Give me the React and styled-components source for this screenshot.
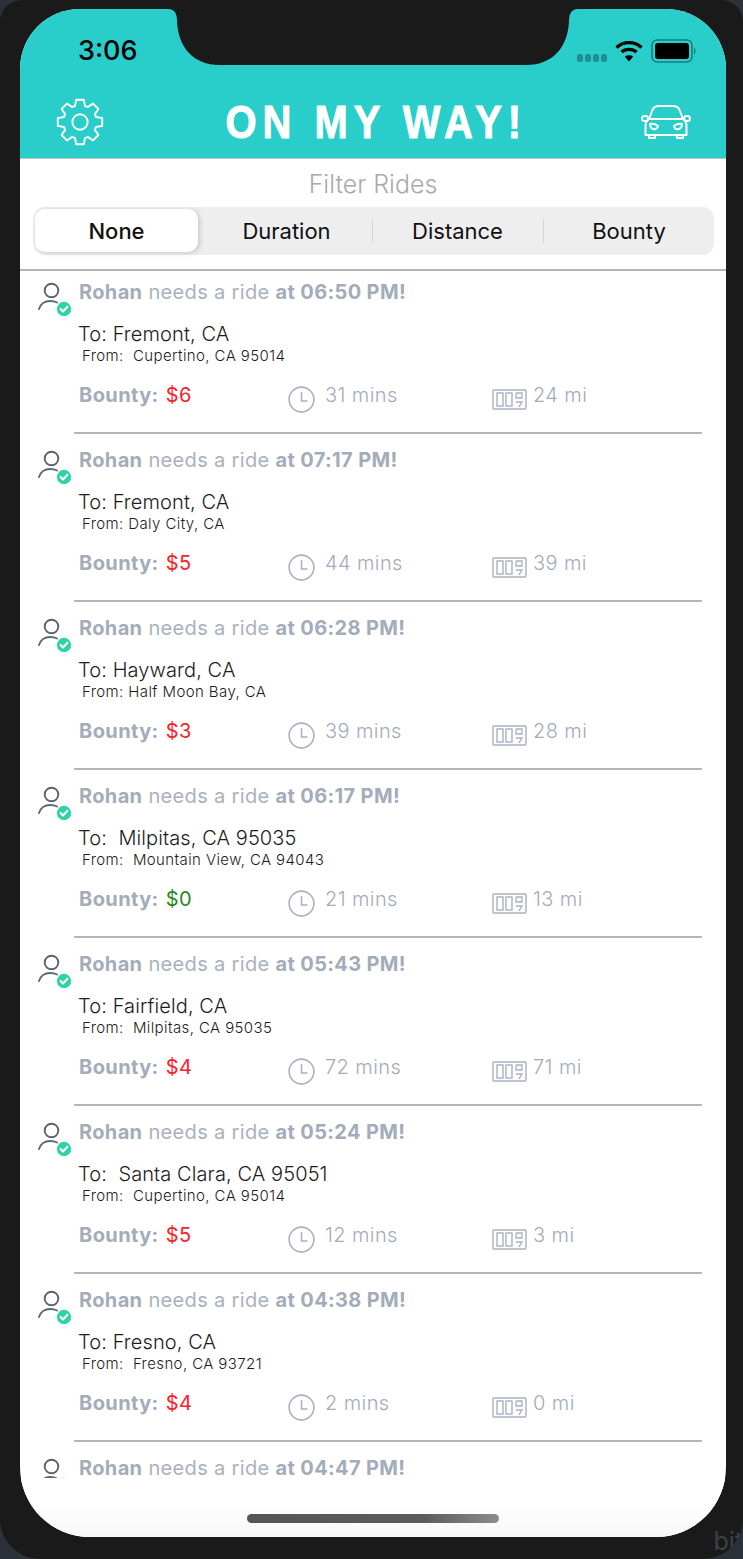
import React from "react";
import styled, { createGlobalStyle } from "styled-components";

const GlobalStyle = createGlobalStyle`
  html, body {
    margin: 0;
    padding: 0;
    background: #2b3039;
  }
  * {
    box-sizing: border-box;
  }
`;

const Device = styled.div`
  position: relative;
  width: 743px;
  height: 1559px;
  overflow: hidden;
  padding: 9px 17px 22px 20px;
  background: #1a1a1a;
  border-radius: 22px 22px 40px 40px;
  font-family: Inter, "Noto Sans", sans-serif;
`;

const Backdrop = styled.span`
  position: absolute;
  right: 0;
  bottom: 3px;
  font-size: 25px;
  line-height: 30px;
  color: #3f4145;
`;

const Screen = styled.div`
  position: relative;
  display: flex;
  flex-direction: column;
  height: 1528px;
  overflow: hidden;
  background: #fff;
  border-radius: 60px 60px 70px 70px;
`;

const Notch = styled.svg`
  position: absolute;
  top: 0;
  left: 148px;
  width: 410px;
  height: 56px;
`;

const Header = styled.header`
  display: flex;
  flex-direction: column;
  flex: none;
  height: 150px;
  padding: 0 35px 0 36px;
  background: #29cdca;
  border-bottom: 1px solid #b9c9c9;
`;

const StatusBar = styled.div`
  display: flex;
  align-items: center;
  justify-content: space-between;
  height: 36px;
  margin-top: 24px;
  padding-left: 22px;
`;

const Clock = styled.span`
  font-size: 27px;
  font-weight: 500;
  line-height: 36px;
  color: #000;
`;

const StatusIcons = styled.div`
  display: flex;
  align-items: center;
  margin-right: -6px;
  gap: 8px;
`;

const SignalIcon = styled.svg`
  width: 30px;
  height: 14px;
  margin-top: 13px;
`;

const TopBar = styled.div`
  display: flex;
  align-items: center;
  justify-content: space-between;
  margin-top: 28px;
  height: 50px;
`;

const Logo = styled.h1`
  margin: 0 0 0 8px;
  font-family: "Liberation Sans", sans-serif;
  font-size: 47px;
  font-weight: 700;
  line-height: 50px;
  letter-spacing: 7px;
  color: #fff;
  -webkit-text-stroke: 1px #fff;
  transform: scaleX(0.85);
`;

const FilterTitle = styled.div`
  flex: none;
  height: 48px;
  font-size: 25px;
  font-weight: 300;
  line-height: 50px;
  text-align: center;
  color: #a9a9a9;
`;

const Segments = styled.div`
  display: grid;
  flex: none;
  grid-template-columns: 163px 174px 171px 1fr;
  height: 48px;
  margin: 0 12px 0 13px;
  padding: 2px;
  background: #eeeeee;
  border-radius: 12px;
`;

const Segment = styled.div`
  position: relative;
  display: flex;
  align-items: center;
  justify-content: center;
  height: 43px;
  padding-left: ${(p) => (p.$nudge ? "3px" : "0")};
  font-size: 22px;
  font-weight: ${(p) => (p.$active ? 500 : 400)};
  color: #111;
  background: ${(p) => (p.$active ? "#fff" : "transparent")};
  border-radius: 10px;
  box-shadow: ${(p) => (p.$active ? "2px 1px 5px rgba(0, 0, 0, 0.16)" : "none")};

  &::before {
    content: "";
    display: ${(p) => (p.$divided ? "block" : "none")};
    position: absolute;
    left: 0;
    top: 10px;
    height: 24px;
    width: 1px;
    background: #d4d4d4;
  }
`;

const List = styled.div`
  flex: none;
  height: 1209px;
  margin-top: 14px;
  border-top: 2px solid #b5b5b5;
`;

const Row = styled.article`
  display: flex;
  flex-direction: column;
  height: 168px;
  padding-bottom: 5px;
`;

const RowBody = styled.div`
  display: flex;
  flex: 1;
  padding: 9px 0 0 16px;
`;

const AvatarSlot = styled.div`
  flex: none;
  width: 43px;
  height: ${(p) => (p.$cut ? "20px" : "38px")};
  margin-top: 2px;
  overflow: hidden;
`;

const AvatarIcon = styled.svg`
  display: block;
  width: 43px;
  height: 38px;
`;

const Details = styled.div`
  display: flex;
  flex-direction: column;
  flex: 1;
`;

const Title = styled.div`
  margin: 2px 0;
  font-size: 20px;
  line-height: 20px;
  letter-spacing: 0.35px;
  color: #a9b1c0;
  white-space: pre;

  b {
    font-weight: 700;
    color: #a3acbb;
  }
`;

const Destination = styled.div`
  margin-top: 18px;
  margin-left: -1px;
  font-size: 20px;
  font-weight: 300;
  line-height: 24px;
  letter-spacing: 0.1px;
  color: #1c1c1c;
  white-space: pre;
`;

const Origin = styled.div`
  margin-left: 3px;
  font-size: 15px;
  font-weight: 300;
  line-height: 20px;
  letter-spacing: 0.4px;
  color: #1c1c1c;
  white-space: pre;
`;

const Meta = styled.div`
  display: grid;
  grid-template-columns: 209px 204px auto;
  margin-top: 17px;
  font-size: 20px;
  font-weight: 300;
  line-height: 24px;
  letter-spacing: 0.4px;
  color: #a3acbb;
`;

const MetaItem = styled.div`
  display: flex;
  align-items: flex-start;
  gap: ${(p) => p.$gap}px;
`;

const BountyLabel = styled.b`
  font-weight: 700;
  margin-right: 7px;
`;

const BountyValue = styled.span`
  font-weight: 400;
  color: ${(p) => (p.$free ? "#1f8a1f" : "#fc2029")};
`;

const ClockIcon = styled.svg`
  width: 27px;
  height: 27px;
  margin-top: 3px;
`;

const OdometerIcon = styled.svg`
  width: 35px;
  height: 21px;
  margin-top: 6px;
`;

const Divider = styled.div`
  flex: none;
  height: 2px;
  margin: 0 24px 0 54px;
  background: #b3b6ba;
`;

const Footer = styled.div`
  display: flex;
  flex: 1;
  justify-content: center;
  padding-top: 36px;
  background: linear-gradient(#ffffff 40%, #f8f8f8);
`;

const HomeBar = styled.div`
  width: 252px;
  height: 9px;
  border-radius: 5px;
  background: linear-gradient(90deg, #555 0%, #5c5c5c 70%, #8c8c8c 100%);
`;

const gearPath = () => {
  const pts = [];
  const cx = 25;
  const cy = 25;
  const outer = 23.5;
  const inner = 17.5;
  for (let i = 0; i < 8; i++) {
    const a = (i * Math.PI) / 4 - Math.PI / 2;
    const at = (r, d) => [
      (cx + r * Math.cos(a + d)).toFixed(2),
      (cy + r * Math.sin(a + d)).toFixed(2),
    ];
    pts.push(at(inner, -0.3), at(outer, -0.17), at(outer, 0.17), at(inner, 0.3));
  }
  return "M" + pts.map((p) => p.join(" ")).join("L") + "Z";
};

const Gear = () => (
  <svg width="48" height="48" viewBox="0 0 50 50" fill="none" stroke="#fff" strokeWidth="2" strokeLinejoin="round">
    <path d={gearPath()} />
    <circle cx="25" cy="25" r="8" />
  </svg>
);

const Car = () => (
  <svg width="50" height="36" viewBox="0 0 50 36" fill="none" stroke="#fff" strokeWidth="2" strokeLinejoin="round" strokeLinecap="round">
    <path d="M8 15 L11.5 6 Q13 2 18 2 H32 Q37 2 38.5 6 L42 15" />
    <path d="M8 15 Q4.5 17 4.5 22 V31 H45.5 V22 Q45.5 17 42 15 Z" />
    <path d="M8 15 H42" />
    <rect x="1" y="12" width="6" height="5" rx="2.5" />
    <rect x="43" y="12" width="6" height="5" rx="2.5" />
    <path d="M8 31 V34 H14 V31 M36 31 V34 H42 V31" />
    <path d="M9 20 Q14 19 17 22 Q16 26 12 25 Q9 24 9 20 Z" />
    <path d="M41 20 Q36 19 33 22 Q34 26 38 25 Q41 24 41 20 Z" />
  </svg>
);

const Signal = () => (
  <SignalIcon viewBox="0 0 30 14" fill="#1d8f8f">
    <rect x="0" y="3" width="6" height="8" rx="2.5" />
    <rect x="8" y="3" width="6" height="8" rx="2.5" />
    <rect x="16" y="3" width="6" height="8" rx="2.5" />
    <rect x="24" y="3" width="6" height="8" rx="2.5" />
  </SignalIcon>
);

const Wifi = () => (
  <svg width="28" height="22" viewBox="0 0 28 22" fill="none" stroke="#000" strokeWidth="3.4">
    <path d="M1.5 7.5 C8.5 1 19.5 1 26.5 7.5" />
    <path d="M6.5 12 C10.5 8.5 17.5 8.5 21.5 12" />
    <path d="M14 21.5 L9.8 16.6 C12 14.8 16 14.8 18.2 16.6 Z" fill="#000" stroke="none" />
  </svg>
);

const Battery = () => (
  <svg width="46" height="24" viewBox="0 0 46 24">
    <rect x="1" y="1" width="40" height="22" rx="5" fill="none" stroke="#167f80" strokeWidth="1.6" />
    <rect x="4" y="4" width="34" height="16" rx="3" fill="#000" />
    <path d="M43 8.5 C45 9.5 45 14.5 43 15.5 Z" fill="#167f80" />
  </svg>
);

const UserBadge = ({ cut }) => (
  <AvatarSlot $cut={cut}>
    <AvatarIcon viewBox="0 0 43 38" fill="none">
      <circle cx="15.5" cy="8.5" r="6.8" stroke="#5c6472" strokeWidth="1.9" />
      <path d="M3 27 C4.5 22 9 19 14 19 C17 19 19 19.5 21 20.5" stroke="#5c6472" strokeWidth="1.9" strokeLinecap="round" />
      <circle cx="28" cy="27" r="7.2" fill="#2fd3a6" />
      <path d="M24.5 27 L27 29.5 L31.5 24.8" stroke="#fff" strokeWidth="2" strokeLinecap="round" strokeLinejoin="round" />
    </AvatarIcon>
  </AvatarSlot>
);

const Clockface = () => (
  <ClockIcon viewBox="0 0 27 27" fill="none" stroke="#a9b1c0" strokeWidth="1.6">
    <circle cx="13.5" cy="13.5" r="12.4" />
    <path d="M13.5 6.5 V15 H19" strokeLinecap="round" />
  </ClockIcon>
);

const Odometer = () => (
  <OdometerIcon viewBox="0 0 35 21" fill="none" stroke="#a9b1c0" strokeWidth="1.4">
    <rect x="1" y="1" width="33" height="19" rx="1" />
    <rect x="5" y="4" width="6" height="13" />
    <rect x="14" y="4" width="6" height="13" />
    <path d="M24 4 V9 H30 V4 H24 M24 13 H30 L27 18" />
  </OdometerIcon>
);

const rides = [
  { time: "06:50", to: "To: Fremont, CA", from: "From:  Cupertino, CA 95014", bounty: 6, mins: 31, miles: 24 },
  { time: "07:17", to: "To: Fremont, CA", from: "From: Daly City, CA", bounty: 5, mins: 44, miles: 39 },
  { time: "06:28", to: "To: Hayward, CA", from: "From: Half Moon Bay, CA", bounty: 3, mins: 39, miles: 28 },
  { time: "06:17", to: "To:  Milpitas, CA 95035", from: "From:  Mountain View, CA 94043", bounty: 0, mins: 21, miles: 13 },
  { time: "05:43", to: "To: Fairfield, CA", from: "From:  Milpitas, CA 95035", bounty: 4, mins: 72, miles: 71 },
  { time: "05:24", to: "To:  Santa Clara, CA 95051", from: "From:  Cupertino, CA 95014", bounty: 5, mins: 12, miles: 3 },
  { time: "04:38", to: "To: Fresno, CA", from: "From:  Fresno, CA 93721", bounty: 4, mins: 2, miles: 0 },
];

const filters = ["None", "Duration", "Distance", "Bounty"];

const RideTitle = ({ time }) => (
  <Title>
    <b>Rohan</b> needs a ride <b>at {time} PM!</b>
  </Title>
);

const App = () => (
  <>
    <GlobalStyle />
    <Device>
      <Backdrop>bit</Backdrop>
      <Screen>
        <Header>
          <StatusBar>
            <Clock>3:06</Clock>
            <StatusIcons>
              <Signal />
              <Wifi />
              <Battery />
            </StatusIcons>
          </StatusBar>
          <TopBar>
            <Gear />
            <Logo>ON MY WAY!</Logo>
            <Car />
          </TopBar>
        </Header>
        <FilterTitle>Filter Rides</FilterTitle>
        <Segments>
          {filters.map((f, i) => (
            <Segment key={f} $active={i === 0} $divided={i > 1} $nudge={i % 2 === 1}>
              {f}
            </Segment>
          ))}
        </Segments>
        <List>
          {rides.map((r) => (
            <Row key={r.time}>
              <RowBody>
                <UserBadge />
                <Details>
                  <RideTitle time={r.time} />
                  <Destination>{r.to}</Destination>
                  <Origin>{r.from}</Origin>
                  <Meta>
                    <MetaItem>
                      <span>
                        <BountyLabel>Bounty:</BountyLabel>
                        <BountyValue $free={r.bounty === 0}>${r.bounty}</BountyValue>
                      </span>
                    </MetaItem>
                    <MetaItem $gap={10}>
                      <Clockface />
                      <span>{r.mins} mins</span>
                    </MetaItem>
                    <MetaItem $gap={6}>
                      <Odometer />
                      <span>{r.miles} mi</span>
                    </MetaItem>
                  </Meta>
                </Details>
              </RowBody>
              <Divider />
            </Row>
          ))}
          <RowBody>
            <UserBadge cut />
            <Details>
              <RideTitle time="04:47" />
            </Details>
          </RowBody>
        </List>
        <Footer>
          <HomeBar />
        </Footer>
        <Notch viewBox="0 0 410 56">
          <path
            fill="#1a1a1a"
            d="M0 0 C6 0 9 4 9 12 C10 38 25 56 52 56 H358 C385 56 400 38 401 12 C401 4 404 0 410 0 Z"
          />
        </Notch>
      </Screen>
    </Device>
  </>
);

export default App;
